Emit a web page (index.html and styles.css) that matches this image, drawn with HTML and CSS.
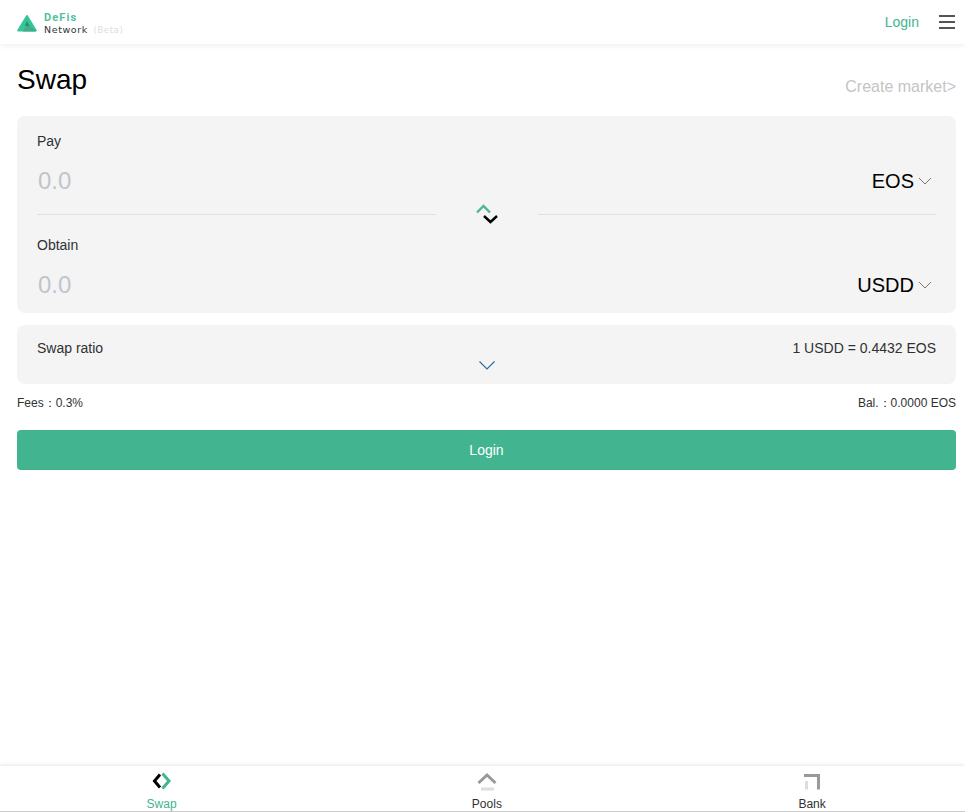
FILE: index.html
```html
<!DOCTYPE html>
<html lang="en">
<head>
    <meta charset="UTF-8">
    <title>Swap</title>
    <link rel="stylesheet" href="styles.css">
</head>
<body>
<div class="page">
    <header class="topBar">
        <div class="logo">
            <svg class="logoMark" width="20" height="18" viewBox="0 0 20 18">
                <path d="M10 2 L18.800 16.500 L1.200 16.500 Z" fill="#35c596" stroke="#35c596" stroke-width="2" stroke-linejoin="round"/>
                <path d="M10 10 L19 16.500 Q19.500 17.500 18 17.500 L6 17.500 Z" fill="#45ab8c"/>
                <path d="M10 7 L12.500 12 L8 12 Z" fill="#1f8f70"/>
            </svg>
            <div class="logoText">
                <div class="logoTop">DeFis</div>
                <div class="logoBottom">Network <span class="logoBeta">(Beta)</span></div>
            </div>
        </div>
        <div class="topRight">
            <a class="topLogin">Login</a>
            <div class="menuBtn"><span></span><span></span><span></span></div>
        </div>
    </header>

    <main class="content">
        <div class="titleRow">
            <h1 class="title">Swap</h1>
            <a class="createLink">Create market&gt;</a>
        </div>

        <section class="card swapCard">
            <div class="fieldLabel">Pay</div>
            <div class="fieldRow">
                <span class="amount">0.0</span>
                <span class="token">EOS
                    <svg class="tokenArrow" width="14" height="8" viewBox="0 0 14 8"><path d="M1 1 L7 7 L13 1" fill="none" stroke="#777" stroke-width="1"/></svg>
                </span>
            </div>
            <div class="divider">
                <span class="line"></span>
                <svg class="switchIcon" width="24" height="24" viewBox="0 0 24 24">
                    <path d="M2 10.500 L8.500 4 L15 10.500" fill="none" stroke="#4db896" stroke-width="2.400"/>
                    <path d="M9 14 L15.500 20 L22 14" fill="none" stroke="#000" stroke-width="2.400"/>
                </svg>
                <span class="line"></span>
            </div>
            <div class="fieldLabel obtainLabel">Obtain</div>
            <div class="fieldRow">
                <span class="amount">0.0</span>
                <span class="token">USDD
                    <svg class="tokenArrow" width="14" height="8" viewBox="0 0 14 8"><path d="M1 1 L7 7 L13 1" fill="none" stroke="#777" stroke-width="1"/></svg>
                </span>
            </div>
        </section>

        <section class="card ratioCard">
            <div class="ratioRow">
                <span>Swap ratio</span>
                <span>1 USDD = 0.4432 EOS</span>
            </div>
            <svg class="ratioArrow" width="18" height="10" viewBox="0 0 18 10"><path d="M1.500 1.500 L9 9 L16.500 1.500" fill="none" stroke="#2f6f9f" stroke-width="1.200"/></svg>
        </section>

        <div class="infoRow">
            <span>Fees：0.3%</span>
            <span>Bal.：0.0000 EOS</span>
        </div>

        <button class="loginBtn">Login</button>
    </main>

    <nav class="tabBar">
        <a class="tabItem tabActive">
            <svg width="20" height="20" viewBox="0 0 20 20">
                <path d="M8 3.500 L2.500 10 L8 16.500" fill="none" stroke="#000" stroke-width="3"/>
                <path d="M10.500 2.500 L17 10 L10.500 17.500" fill="none" stroke="#42b48f" stroke-width="3"/>
            </svg>
            <span>Swap</span>
        </a>
        <a class="tabItem">
            <svg width="20" height="20" viewBox="0 0 20 20">
                <path d="M1.500 12 L10 4 L18.500 12" fill="none" stroke="#999" stroke-width="3"/>
                <path d="M4 18 L17 18" fill="none" stroke="#ddd" stroke-width="3"/>
            </svg>
            <span>Pools</span>
        </a>
        <a class="tabItem">
            <svg width="20" height="20" viewBox="0 0 20 20">
                <path d="M2 4.500 L16.500 4.500 L16.500 18.500" fill="none" stroke="#999" stroke-width="3"/>
                <path d="M4.500 10 L4.500 18.500" fill="none" stroke="#ddd" stroke-width="3"/>
            </svg>
            <span>Bank</span>
        </a>
    </nav>
</div>
</body>
</html>
```

FILE: styles.css
```css
* {
    box-sizing: border-box;
}

body {
    margin: 0;
    background: #fff;
    color: #303133;
    font-family: "Liberation Sans", Arial, sans-serif;
}

.page {
    display: flex;
    flex-direction: column;
    height: 812px;
    overflow: hidden;
}

.topBar {
    display: flex;
    justify-content: space-between;
    align-items: center;
    flex: none;
    height: 44px;
    padding: 0 10px 0 17px;
    box-shadow: 0 1px 6px rgba(0,0,0,0.08);
}

.logo {
    display: flex;
    align-items: center;
    gap: 7px;
}

.logoMark {
    display: block;
    margin-top: 2px;
}

.logoText {
    margin-top: 2px;
    font-family: "DejaVu Sans", sans-serif;
}

.logoTop {
    color: #4fc29c;
    font-family: Roboto, sans-serif;
    font-size: 11px;
    font-weight: bold;
    letter-spacing: 1.100px;
    line-height: 13px;
}

.logoBottom {
    color: #333;
    font-size: 9.500px;
    letter-spacing: 0.600px;
    line-height: 11px;
}

.logoBeta {
    margin-left: 2px;
    color: #ddd;
    font-size: 8.500px;
}

.topRight {
    display: flex;
    align-items: center;
    gap: 20px;
}

.topLogin {
    color: #42b48f;
    font-size: 14px;
}

.menuBtn {
    display: flex;
    flex-direction: column;
    gap: 4px;
    width: 16px;
}

.menuBtn span {
    display: block;
    height: 2px;
    background: #555;
}

.content {
    flex: 1;
    padding: 0 9px 0 17px;
}

.titleRow {
    display: flex;
    justify-content: space-between;
    align-items: flex-end;
    height: 72px;
    padding-bottom: 19px;
}

.title {
    margin: 0;
    color: #000;
    font-size: 28px;
    font-weight: normal;
    line-height: 30px;
    position: relative;
    top: -2px;
}

.createLink {
    color: #c4c4c4;
    font-size: 16px;
    line-height: 20px;
}

.card {
    background: #f4f4f4;
    border-radius: 8px;
}

.swapCard {
    height: 197px;
    padding: 17px 20px 0;
}

.fieldLabel {
    font-size: 14px;
    line-height: 16px;
}

.obtainLabel {
    margin-top: 11px;
}

.fieldRow {
    display: flex;
    justify-content: space-between;
    align-items: center;
    height: 40px;
    margin-top: 12px;
}

.amount {
    margin-left: 1px;
    color: #c0c4cc;
    font-size: 24px;
}

.token {
    display: flex;
    align-items: center;
    gap: 4px;
    color: #000;
    font-size: 20px;
}

.tokenArrow {
    display: block;
    margin-right: 4px;
}

.divider {
    display: flex;
    align-items: center;
    justify-content: space-between;
    height: 24px;
    margin-top: 1px;
}

.line {
    width: 399px;
    height: 1px;
    background: #e0e0e6;
}

.line:last-child {
    width: 398px;
}

.ratioCard {
    height: 59px;
    margin-top: 12px;
    padding: 15px 20px 0;
    text-align: center;
}

.ratioRow {
    display: flex;
    justify-content: space-between;
    font-size: 14px;
    line-height: 16px;
}

.ratioArrow {
    display: block;
    margin: 4px auto 0;
}

.infoRow {
    display: flex;
    justify-content: space-between;
    margin-top: 12px;
    font-size: 12px;
    line-height: 14px;
}

.loginBtn {
    display: block;
    width: 100%;
    height: 40px;
    margin-top: 20px;
    border: 0;
    border-radius: 4px;
    background: #42b48f;
    color: #fff;
    font-family: inherit;
    font-size: 14px;
}

.tabBar {
    display: flex;
    flex: none;
    height: 46px;
    margin-left: -1px;
    padding-top: 5px;
    border-bottom: 1px solid #ccc;
    box-shadow: 0 -1px 4px rgba(0,0,0,0.1);
}

.tabItem {
    display: flex;
    flex-direction: column;
    align-items: center;
    flex: none;
    width: 325.250px;
    color: #303133;
    font-size: 12px;
    line-height: 14px;
}

.tabItem svg {
    display: block;
    height: 20px;
    margin-bottom: 6px;
}

.tabActive {
    color: #42b48f;
}
```
